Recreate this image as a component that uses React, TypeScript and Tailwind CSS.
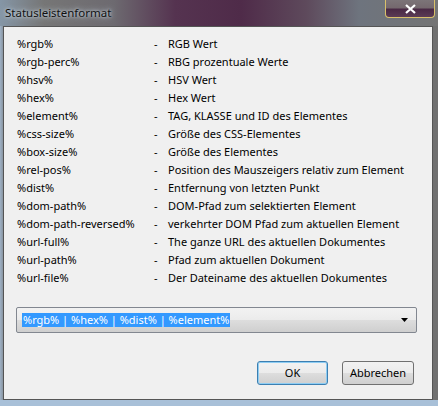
import React from 'react';

const rows: [string, string][] = [
  ['%rgb%', 'RGB Wert'],
  ['%rgb-perc%', 'RBG prozentuale Werte'],
  ['%hsv%', 'HSV Wert'],
  ['%hex%', 'Hex Wert'],
  ['%element%', 'TAG, KLASSE und ID des Elementes'],
  ['%css-size%', 'Größe des CSS-Elementes'],
  ['%box-size%', 'Größe des Elementes'],
  ['%rel-pos%', 'Position des Mauszeigers relativ zum Element'],
  ['%dist%', 'Entfernung von letzten Punkt'],
  ['%dom-path%', 'DOM-Pfad zum selektierten Element'],
  ['%dom-path-reversed%', 'verkehrter DOM Pfad zum aktuellen Element'],
  ['%url-full%', 'The ganze URL des aktuellen Dokumentes'],
  ['%url-path%', 'Pfad zum aktuellen Dokument'],
  ['%url-file%', 'Der Dateiname des aktuellen Dokumentes'],
];

const App: React.FC = () => {
  return (
    <div
      className="w-[438px] h-[406px] flex flex-col bg-[linear-gradient(90deg,#9fb2c6_0px,#8a96a2_3px,#767676_6px,#707070_100%)] text-[11px] text-black"
      style={{ fontFamily: '"Segoe UI", "Noto Sans", "Open Sans", sans-serif' }}
    >
      {/* title bar */}
      <div className="h-[26px] flex items-start bg-[linear-gradient(90deg,#8596a6_0%,#767676_10%,#6d6a70_26%,#553350_40%,#4f2b49_55%,#5e4a5c_70%,#6e747e_82%,#747474_100%)]">
        <div className="pl-[5px] pt-[4px] leading-[18px] text-[11.5px] text-[#111] [text-shadow:0_0_6px_#c9d6e2,0_0_3px_#c9d6e2]">
          Statusleistenformat
        </div>
        <div className="ml-auto mr-[3px] w-[50px] h-[18px] rounded-b-[4px] border border-t-0 border-[#d9c06a] bg-[linear-gradient(180deg,#7c7478_0%,#75696e_45%,#4a2a45_55%,#5b3b55_100%)] flex items-center justify-center">
          <svg width="11" height="10" viewBox="0 0 11 10">
            <path d="M1 1 L10 9 M10 1 L1 9" stroke="#ffffff" strokeWidth="2.2" />
          </svg>
        </div>
      </div>

      {/* client area */}
      <div className="ml-[3px] w-[430px] h-[374px] border border-[#555] bg-[#f0f0f0] flex flex-col">
        <div className="pt-[8px] pl-[13px] grid grid-cols-[137px_14px_1fr]">
          {rows.map(([key, desc]) => (
            <React.Fragment key={key}>
              <div className="h-[18px] leading-[18px] whitespace-nowrap">{key}</div>
              <div className="h-[18px] leading-[18px]">-</div>
              <div className="h-[18px] leading-[18px] whitespace-nowrap">{desc}</div>
            </React.Fragment>
          ))}
        </div>

        <div className="mt-[20px] ml-[12px] w-[401px] h-[26px] rounded-[2px] border border-[#828790] bg-[linear-gradient(180deg,#f2f2f2_0%,#ebebeb_50%,#dddddd_51%,#cfcfcf_100%)] flex items-center pl-[5px] pr-[8px]">
          <span className="bg-[#3399ff] text-white leading-[14px] h-[14px] px-[1px]">
            %rgb% | %hex% | %dist% | %element%
          </span>
          <svg className="ml-auto" width="7" height="4" viewBox="0 0 7 4">
            <path d="M0 0 H7 L3.5 4 Z" fill="#000" />
          </svg>
        </div>

        <div className="mt-[28px] flex justify-end gap-[14px] pr-[18px]">
          <button className="w-[71px] h-[24px] rounded-[3px] border border-[#3c7fb1] bg-[linear-gradient(180deg,#f2f2f2_0%,#ebebeb_50%,#dddddd_51%,#cfcfcf_100%)] shadow-[inset_0_0_0_1px_#8ecdf3]">
            OK
          </button>
          <button className="w-[72px] h-[24px] rounded-[3px] border border-[#707070] bg-[linear-gradient(180deg,#f2f2f2_0%,#ebebeb_50%,#dddddd_51%,#cfcfcf_100%)]">
            Abbrechen
          </button>
        </div>
      </div>
      <div className="flex-1 bg-[#a8c0d8]" />
    </div>
  );
};

export default App;
